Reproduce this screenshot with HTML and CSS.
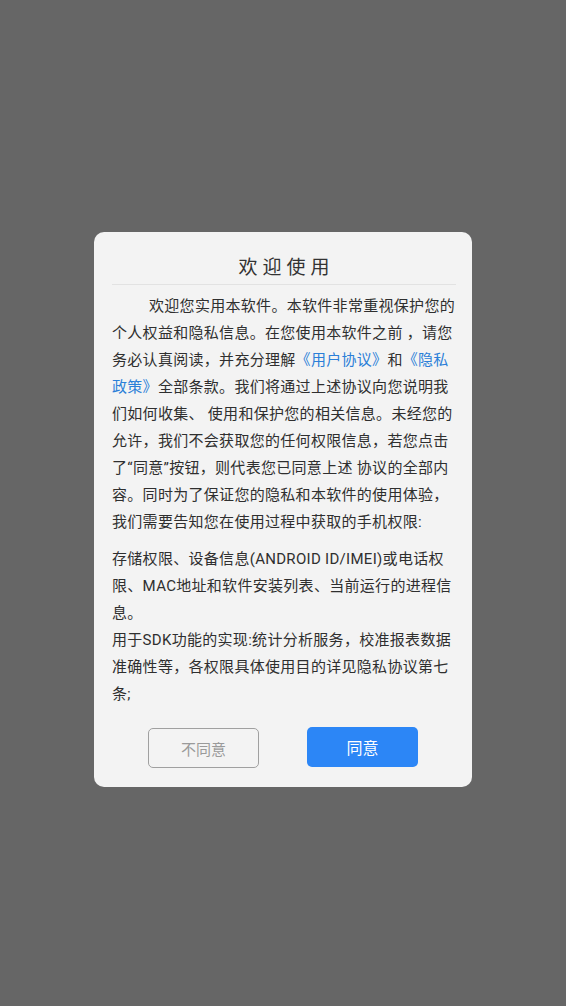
FILE: index.html
```html
<!DOCTYPE html>
<html lang="zh-CN">
<head>
<meta charset="utf-8">
<title>欢迎使用</title>
<link rel="stylesheet" href="styles.css">
</head>
<body>
<div class="screen">
  <div class="dialog">
    <h1 class="title">欢迎使用</h1>
    <div class="body">
      <p class="intro">欢迎您实用本软件。本软件非常重视保护您的个人权益和隐私信息。在您使用本软件之前 ，请您务必认真阅读，并充分理解<a class="link">《用户协议》</a>和<a class="link">《隐私政策》</a>全部条款。我们将通过上述协议向您说明我们如何收集、 使用和保护您的相关信息。未经您的允许，我们不会获取您的任何权限信息，若您点击了“同意”按钮，则代表您已同意上述 协议的全部内容。同时为了保证您的隐私和本软件的使用体验，我们需要告知您在使用过程中获取的手机权限:</p>
      <p class="perm">存储权限、设备信息(ANDROID ID/IMEI)或电话权限、MAC地址和软件安装列表、当前运行的进程信息。</p>
      <p class="perm">用于SDK功能的实现:统计分析服务，校准报表数据准确性等，各权限具体使用目的详见隐私协议第七条;</p>
    </div>
    <div class="actions">
      <button class="btn btn-disagree">不同意</button>
      <button class="btn btn-agree">同意</button>
    </div>
  </div>
</div>
</body>
</html>
```

FILE: styles.css
```css
html, body {
  margin: 0;
  padding: 0;
}
body {
  background: #666666;
  font-family: "Roboto", "Noto Sans CJK SC", sans-serif;
  color: #333333;
}
.screen {
  width: 566px;
  height: 1006px;
  box-sizing: border-box;
  padding-top: 232px;
  display: flex;
  flex-direction: column;
  align-items: center;
}
.dialog {
  width: 378px;
  box-sizing: border-box;
  background: #f3f3f3;
  border-radius: 10px;
  padding: 22px 16px 19px 18px;
}
.title {
  margin: 0;
  font-size: 19px;
  font-weight: 400;
  line-height: 28px;
  height: 30px;
  text-align: center;
  letter-spacing: 5px;
  padding-left: 5px;
  color: #333333;
  border-bottom: 1px solid #e2e2e2;
}
.body {
  padding-top: 8px;
  font-size: 15px;
  line-height: 27px;
  letter-spacing: 0.3px;
  text-spacing-trim: space-all;
  color: #2f2f2f;
}
.body p {
  margin: 0;
}
.intro {
  text-indent: 37px;
  margin-bottom: 10px !important;
}
.link {
  color: #2b7fd8;
  text-decoration: none;
}
.actions {
  display: flex;
  justify-content: center;
  gap: 48px;
  margin-top: 19px;
  padding-right: 2px;
}
.btn {
  width: 111px;
  height: 40px;
  box-sizing: border-box;
  border-radius: 5px;
  font-family: "Roboto", "Noto Sans CJK SC", sans-serif;
  padding: 0;
  cursor: pointer;
}
.btn-disagree {
  background: transparent;
  border: 1px solid #a0a0a0;
  color: #9a9a9a;
  font-size: 15px;
  margin-top: 1px;
}
.btn-agree {
  background: #2c86f6;
  border: none;
  color: #ffffff;
  font-size: 16px;
}
```
